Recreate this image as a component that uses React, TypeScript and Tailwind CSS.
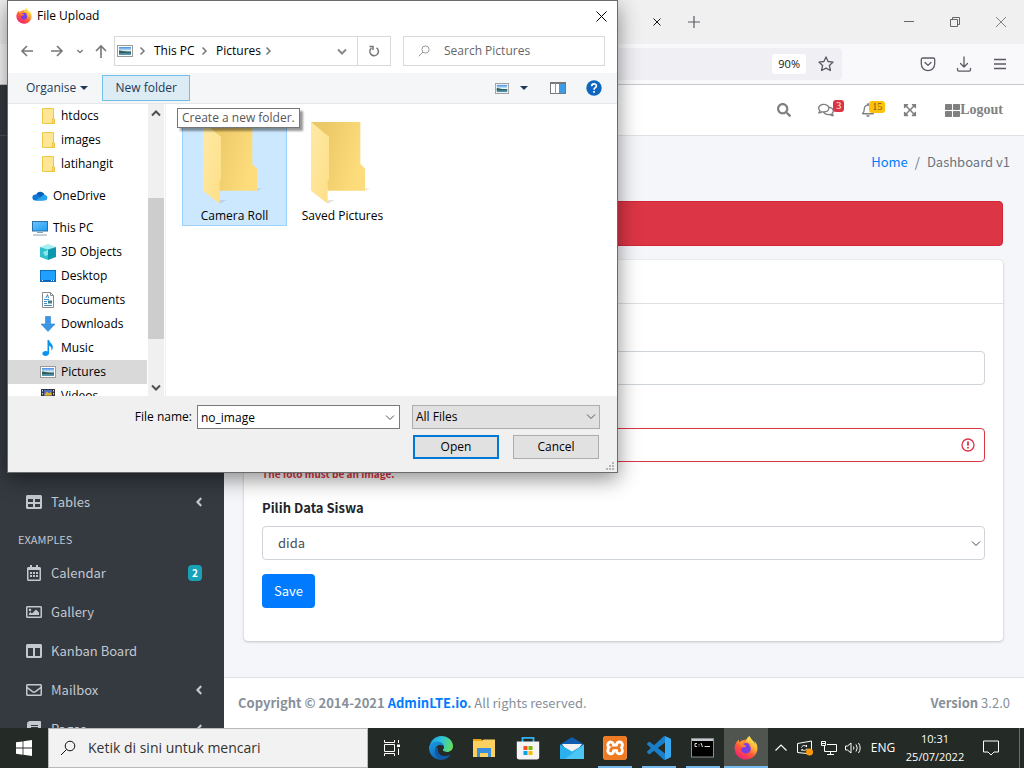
import React from "react";
import {
  FaAngleLeft,
  FaBook,
  FaColumns,
  FaExpandArrowsAlt,
  FaFirefoxBrowser,
  FaRegBell,
  FaRegCalendarAlt,
  FaRegComments,
  FaRegEnvelope,
  FaRegImage,
  FaSearch,
  FaTable,
  FaThLarge,
} from "react-icons/fa";
import { SiXampp } from "react-icons/si";

/* ---------- shared drawings ---------- */

function Gradients() {
  return (
    <svg className="absolute h-0 w-0" aria-hidden="true">
      <defs>
        <linearGradient id="flame" x1="0.85" y1="0.05" x2="0.25" y2="1">
          <stop offset="0" stopColor="#fff44f" />
          <stop offset="0.35" stopColor="#ffb13b" />
          <stop offset="0.6" stopColor="#ff5a36" />
          <stop offset="1" stopColor="#f0197f" />
        </linearGradient>
        <linearGradient id="folderBack" x1="0" y1="0" x2="1" y2="0.3">
          <stop offset="0.25" stopColor="#ecc866" />
          <stop offset="1" stopColor="#fddc7c" />
        </linearGradient>
        <linearGradient id="folderFront" x1="0" y1="0" x2="1" y2="1">
          <stop offset="0" stopColor="#fee9a6" />
          <stop offset="1" stopColor="#fddf86" />
        </linearGradient>
        <linearGradient id="sky" x1="0" y1="0" x2="0" y2="1">
          <stop offset="0" stopColor="#3f8ee0" />
          <stop offset="0.5" stopColor="#e6f3fb" />
          <stop offset="0.6" stopColor="#3f6f6a" />
          <stop offset="1" stopColor="#5b9bc8" />
        </linearGradient>
        <linearGradient id="screen" x1="0" y1="0" x2="1" y2="1">
          <stop offset="0" stopColor="#6cc4ff" />
          <stop offset="1" stopColor="#1f9bf0" />
        </linearGradient>
        <linearGradient id="edgeTop" x1="0" y1="0.3" x2="1" y2="0.5">
          <stop offset="0" stopColor="#1ca5e4" />
          <stop offset="0.5" stopColor="#2fc4d8" />
          <stop offset="1" stopColor="#66dd5a" />
        </linearGradient>
        <linearGradient id="edgeBody" x1="0" y1="0" x2="0.6" y2="1">
          <stop offset="0" stopColor="#1a9fe4" />
          <stop offset="1" stopColor="#0f62b4" />
        </linearGradient>
      </defs>
    </svg>
  );
}

function Firefox({ className }: { className: string }) {
  return (
    <span className={`relative inline-block ${className}`}>
      <svg viewBox="0 0 24 24" className="absolute inset-0 h-full w-full">
        <circle cx="12" cy="12.5" r="9" fill="#ff8a2a" />
        <circle cx="12" cy="12.5" r="5.5" fill="#7a3fe4" />
      </svg>
      <FaFirefoxBrowser fill="url(#flame)" className="relative h-full w-full" />
    </span>
  );
}

function PictureIcon({ className }: { className: string }) {
  return (
    <svg viewBox="0 0 16 12" className={className} preserveAspectRatio="none">
      <rect x="0.5" y="0.5" width="15" height="11" fill="#fff" stroke="#9a9a9a" />
      <rect x="2" y="2" width="12" height="8" fill="url(#sky)" />
      <path d="M2 5.5c3 0 5 1.5 12 1.8V8H2z" fill="#2f5f58" />
    </svg>
  );
}

function Chevron({ className, dir }: { className: string; dir: "up" | "down" | "right" }) {
  const d = { up: "M2 7.5 6 3.5l4 4", down: "M2 4.5l4 4 4-4", right: "M4.5 2.5 8 6l-3.5 3.5" }[dir];
  return (
    <svg viewBox="0 0 12 12" className={className} fill="none" stroke="currentColor">
      <path d={d} />
    </svg>
  );
}

function Magnifier({ className }: { className: string }) {
  return (
    <svg viewBox="0 0 16 16" className={className} fill="none" stroke="currentColor">
      <circle cx="10" cy="6" r="4.8" />
      <path d="M6.6 9.4 1 15" />
    </svg>
  );
}

/* ---------- browser window ---------- */

function BrowserChrome() {
  return (
    <header className="shrink-0">
      <div className="flex h-11 items-center bg-[#f0f0f0]">
        <div className="flex w-[673px] justify-end">
          <button aria-label="Close tab" className="flex w-8 justify-center">
            <svg viewBox="0 0 8 8" className="h-2 w-2" stroke="#15141a">
              <path d="M.5.5l7 7M7.5.5l-7 7" />
            </svg>
          </button>
        </div>
        <button aria-label="New tab" className="flex w-[42px] justify-center">
          <svg viewBox="0 0 12 12" className="h-3 w-3" stroke="#5b5b66" strokeWidth="1.2">
            <path d="M6 0v12M0 6h12" />
          </svg>
        </button>
        <div className="ml-auto flex text-[#666]">
          <button aria-label="Minimise" className="flex w-[46px] items-center justify-center">
            <svg viewBox="0 0 10 10" className="h-[10px] w-[10px]" stroke="currentColor">
              <path d="M0 4.5h10" />
            </svg>
          </button>
          <button aria-label="Restore" className="flex w-[46px] items-center justify-center">
            <svg viewBox="0 0 10 10" className="h-[10px] w-[10px]" fill="none" stroke="currentColor">
              <path d="M.5 2.5h7v7h-7zM2.5 2.5v-2h7v7h-2" />
            </svg>
          </button>
          <button aria-label="Close" className="flex w-[46px] items-center justify-center">
            <svg viewBox="0 0 10 10" className="h-[10px] w-[10px]" stroke="currentColor" strokeWidth="0.8">
              <path d="M0 0l10 10M10 0L0 10" />
            </svg>
          </button>
        </div>
      </div>
      <div className="flex h-[41px] items-center border-b border-[#c8c8cc] bg-[#f9f9fb] text-[#5b5b66]">
        <div className="ml-32 flex h-8 flex-1 items-center justify-end rounded bg-[#f0f0f4] pr-2">
          <button className="h-5 rounded-[3px] bg-white px-1.5 font-['Open_Sans',sans-serif] text-[11px] text-[#15141a]">
            90%
          </button>
          <button aria-label="Bookmark" className="ml-3">
            <svg viewBox="0 0 16 16" className="h-4 w-4" fill="none" stroke="currentColor" strokeWidth="1.3" strokeLinejoin="round">
              <path d="M8 .9l2.1 4.6 5 .6-3.7 3.4 1 5L8 12.1l-4.4 2.4 1-5L.9 6.1l5-.6z" />
            </svg>
          </button>
        </div>
        <div className="flex w-[182px] justify-end pr-1.5">
          <button aria-label="Pocket" className="flex w-9 justify-center">
            <svg viewBox="0 0 16 16" className="h-4 w-4" fill="none" stroke="currentColor" strokeWidth="1.3" strokeLinecap="round" strokeLinejoin="round">
              <path d="M2.7 2h10.6c.8 0 1.4.6 1.4 1.4V8a6.7 6.7 0 0 1-13.4 0V3.4C1.3 2.6 1.9 2 2.7 2z" />
              <path d="M5 6.5l3 2.9 3-2.9" />
            </svg>
          </button>
          <button aria-label="Downloads" className="flex w-9 justify-center">
            <svg viewBox="0 0 16 16" className="h-4 w-4" fill="none" stroke="currentColor" strokeWidth="1.3" strokeLinecap="round" strokeLinejoin="round">
              <path d="M8 1v10M4.5 7.5L8 11l3.5-3.5M1.5 12.5v1.3c0 .8.6 1.4 1.4 1.4h10.2c.8 0 1.4-.6 1.4-1.4v-1.3" />
            </svg>
          </button>
          <button aria-label="Menu" className="flex w-9 justify-center">
            <svg viewBox="0 0 14 16" className="h-4 w-[14px]" stroke="currentColor" strokeWidth="1.3">
              <path d="M1 3.5h12M1 8h12M1 12.5h12" />
            </svg>
          </button>
        </div>
      </div>
    </header>
  );
}

/* ---------- dashboard ---------- */

function SideItem({ icon, label, right }: { icon: React.ReactNode; label: string; right?: React.ReactNode }) {
  return (
    <li>
      <a href="#" className="flex h-[39px] items-center pl-[26px] pr-[22px]">
        <span className="flex w-[25px]">{icon}</span>
        <span className="flex-1">{label}</span>
        {right}
      </a>
    </li>
  );
}

function Sidebar() {
  const arrow = <FaAngleLeft className="-mr-1 h-[14px] w-[14px]" />;
  return (
    <aside className="w-56 shrink-0 overflow-hidden bg-[#343a40] text-[13px] leading-5 text-[#c2c7d0] shadow-[0_8px_20px_rgba(0,0,0,0.35)]">
      <div className="h-[51px] border-b border-[#4b545c]" />
      <nav className="pt-[346px]">
        <ul>
          <SideItem icon={<FaTable className="h-4 w-4" />} label="Tables" right={arrow} />
          <li className="flex h-8 items-center pl-[18px] pt-1 text-[11px]">EXAMPLES</li>
          <SideItem
            icon={<FaRegCalendarAlt className="h-4 w-4" />}
            label="Calendar"
            right={
              <span className="flex h-4 w-[14px] items-center justify-center rounded bg-[#17a2b8] text-[10px] font-bold text-white">
                2
              </span>
            }
          />
          <SideItem icon={<FaRegImage className="h-4 w-4" />} label="Gallery" />
          <SideItem icon={<FaColumns className="h-4 w-4" />} label="Kanban Board" />
          <SideItem icon={<FaRegEnvelope className="h-4 w-4" />} label="Mailbox" right={arrow} />
          <SideItem icon={<FaBook className="h-4 w-4" />} label="Pages" right={arrow} />
        </ul>
      </nav>
    </aside>
  );
}

function TopNav() {
  const cell = "relative flex w-[42px] justify-center";
  return (
    <nav className="flex h-[51px] shrink-0 items-center justify-end border-b border-[#dee2e6] bg-white pr-[21px] text-[#808080]">
      <button aria-label="Search" className={cell}>
        <FaSearch className="h-[14px] w-[14px]" />
      </button>
      <button aria-label="Messages" className={cell}>
        <FaRegComments className="h-4 w-4" />
        <span className="absolute -top-0.5 right-[3px] rounded-[3px] bg-[#dc3545] px-[3px] font-['Liberation_Serif',serif] text-[10px] leading-3 text-white">
          3
        </span>
      </button>
      <button aria-label="Notifications" className={cell}>
        <FaRegBell className="h-[14px] w-[14px]" />
        <span className="absolute -top-0.5 right-1 rounded-[3px] bg-[#ffc107] px-[3px] font-['Liberation_Serif',serif] text-[10px] leading-3 text-[#6b5a2a]">
          15
        </span>
      </button>
      <button aria-label="Full screen" className={cell}>
        <FaExpandArrowsAlt className="h-[14px] w-[14px]" />
      </button>
      <a href="#" className="flex items-center pl-[14px] font-['Liberation_Serif',serif] text-[14px] font-bold leading-5">
        <FaThLarge className="h-[15px] w-[15px]" />
        Logout
      </a>
    </nav>
  );
}

function FormCard() {
  return (
    <form className="mt-[14px] rounded bg-white text-[13px] shadow-[0_0_1px_rgba(0,0,0,0.125),0_1px_3px_rgba(0,0,0,0.2)]">
      <div className="h-11 border-b border-[#dfdfdf]" />
      <div className="px-[18px] pb-[33px] pt-[47px]">
        <input aria-label="Nama" className="block h-[34px] w-full rounded border border-[#ced4da] px-3" />
        <div className="mt-[43px] flex h-[34px] items-center rounded border border-[#dc3545] px-2">
          <input type="file" aria-label="Foto" className="min-w-0 flex-1" />
          <svg viewBox="0 0 16 16" className="h-4 w-4" fill="none" stroke="#dc3545">
            <circle cx="8" cy="8" r="6" strokeWidth="1.3" />
            <path d="M8 4.5v4.2M8 10v1.5" strokeWidth="1.8" />
          </svg>
        </div>
        <p className="mt-1 text-[10px] font-bold leading-4 text-[#dc3545]">The foto must be an image.</p>
        <label htmlFor="siswa" className="mt-4 block font-bold leading-5 text-[#212529]">
          Pilih Data Siswa
        </label>
        <div className="relative mt-2">
          <select
            id="siswa"
            className="block h-[34px] w-full appearance-none rounded border border-[#ced4da] bg-white pl-[15px] leading-5 text-[#495057]"
          >
            <option>dida</option>
          </select>
          <Chevron dir="down" className="pointer-events-none absolute right-[3px] top-[11px] h-3 w-3 text-[#444]" />
        </div>
        <button type="button" className="mt-[14px] h-[34px] rounded bg-[#007bff] px-3 leading-5 text-white">
          Save
        </button>
      </div>
    </form>
  );
}

function Dashboard() {
  return (
    <div className="flex min-h-0 flex-1 overflow-hidden font-['Noto_Sans_CJK_SC','Source_Sans_Pro',sans-serif]">
      <Sidebar />
      <div className="flex min-w-0 flex-1 flex-col bg-[#f4f6f9]">
        <TopNav />
        <main className="flex-1 pl-5 pr-[21px]">
          <div className="-mr-[7px] flex h-[65px] items-center justify-end pb-[14px] text-[13px] leading-5 text-[#6c757d]">
            <a href="#" className="text-[#007bff]">
              Home
            </a>
            <span className="px-[7px]">/</span>
            <span>Dashboard v1</span>
          </div>
          <div role="alert" className="h-[45px] rounded border border-[#d32535] bg-[#dc3545]" />
          <FormCard />
        </main>
        <footer className="flex h-[51px] shrink-0 items-center justify-between border-t border-[#dee2e6] bg-white px-[14px] text-[13px] leading-5 text-[#869099]">
          <span>
            <strong>
              Copyright © 2014-2021{" "}
              <a href="#" className="text-[#007bff]">
                AdminLTE.io
              </a>
              .
            </strong>{" "}
            All rights reserved.
          </span>
          <span>
            <b>Version</b> 3.2.0
          </span>
        </footer>
      </div>
    </div>
  );
}

/* ---------- file dialog ---------- */

const smallFolder = (
  <svg viewBox="0 0 16 16" className="h-4 w-4">
    <path d="M2.5.5h11v10l1 .8v4.2h-12z" fill="#ffe694" stroke="#ecc648" />
    <path d="M12.500 15.500v-4.500h2v4.500z" fill="#fbdc6f" stroke="#e5bb3c" strokeWidth="0.7" />
  </svg>
);

const treeItems: { label: string; icon: React.ReactNode; top?: boolean; active?: boolean }[] = [
  { label: "htdocs", icon: smallFolder },
  { label: "images", icon: smallFolder },
  { label: "latihangit", icon: smallFolder },
  {
    label: "OneDrive",
    top: true,
    icon: (
      <svg viewBox="0 0 16 16" className="h-4 w-4">
        <path d="M4 7a4.600 4.600 0 0 1 8.600-.5L8 11z" fill="#0a5fb8" />
        <path d="M3.600 6.500a4 4 0 0 1 3 .8l5 5.200H3.200a3 3 0 0 1 .4-6z" fill="#1177d6" />
        <path d="M11 7.200a3.300 3.300 0 0 1 2.200-.3 2.900 2.900 0 0 1-.2 5.700H3.500L8 9.500z" fill="#28a3ea" />
      </svg>
    ),
  },
  {
    label: "This PC",
    top: true,
    icon: (
      <svg viewBox="0 0 16 16" className="h-4 w-4">
        <rect x="0.5" y="1.5" width="15" height="9.5" fill="url(#screen)" stroke="#2a6fa8" />
        <path d="M5 12.5h6M1 15h14" stroke="#8fa0ae" />
      </svg>
    ),
  },
  {
    label: "3D Objects",
    icon: (
      <svg viewBox="0 0 16 16" className="h-4 w-4">
        <path d="M0 3l8-3 8 3-8 2.500z" fill="#a8eef2" />
        <path d="M0 3l8 2.500V16l-8-3z" fill="#2fc0cc" />
        <path d="M16 3L8 5.500V16l8-3z" fill="#0b98ae" />
        <path d="M3 8l5-2v5l-3 1z" fill="#8fe6ea" />
      </svg>
    ),
  },
  {
    label: "Desktop",
    icon: (
      <svg viewBox="0 0 16 16" className="h-4 w-4">
        <rect x="0.5" y="2.5" width="15" height="11" fill="#1fa0ff" stroke="#0b6fc4" />
        <path d="M1 12.5h14" stroke="#0a5fae" />
        <path d="M2 12.5h1M11 12.5h1M13 12.5h1" stroke="#fff" />
      </svg>
    ),
  },
  {
    label: "Documents",
    icon: (
      <svg viewBox="0 0 16 16" className="h-4 w-4">
        <path d="M2.5.5h8l3 3v12h-11z" fill="#fff" stroke="#8a8a8a" />
        <path d="M10.5.5v3h3" fill="none" stroke="#8a8a8a" />
        <path d="M6 6l1.500-3.500L8.500 6M4 7.500h5M4 9.500h3M4 11.500h3M4 13.500h8" fill="none" stroke="#3b8fd0" />
        <rect x="8" y="8.500" width="4" height="3" fill="#3f7f8a" />
      </svg>
    ),
  },
  {
    label: "Downloads",
    icon: (
      <svg viewBox="0 0 16 16" className="h-4 w-4">
        <path d="M5.5.5h5V8H15l-7 7.500L1 8h4.500z" fill="#3b97e6" stroke="#2a7fd0" strokeWidth="0.6" />
      </svg>
    ),
  },
  {
    label: "Music",
    icon: (
      <svg viewBox="0 0 16 16" className="h-4 w-4">
        <path d="M7.500 0h1.600c.4 2.800 4 4 3.700 7.500-.1 1.600-1 2.700-1.600 3.200.7-2.600 0-4.200-2.100-5v7.300c0 1.700-1.500 2.900-3.500 2.900S2.300 15 2.300 13.500 4 11 5.600 11c.7 0 1.300.1 1.900.4z" fill="#0a94f0" />
      </svg>
    ),
  },
  { label: "Pictures", active: true, icon: <PictureIcon className="h-3 w-4" /> },
  {
    label: "Videos",
    icon: (
      <svg viewBox="0 0 16 16" className="h-4 w-4">
        <rect x="1" y="1" width="14" height="14" fill="#333" />
        <path d="M2.500 2v12M13.500 2v12" stroke="#ddd" strokeDasharray="1.5 1.5" />
        <rect x="4" y="2" width="8" height="5.500" fill="#4a6fd0" />
        <path d="M4 7.500l3-4 2 2 1.500-1.500 1.500 3.500z" fill="#e6b422" />
      </svg>
    ),
  },
];

function BigFolder() {
  return (
    <svg viewBox="0 0 180 246" className="h-[82px] w-[60px]">
      <path d="M162 206l16-8-16 2zM50 245l22-12-22 2z" fill="#8a8a8a" opacity="0.25" />
      <path d="M0 0h148v126l14 14v66H50z" fill="url(#folderBack)" />
      <path d="M0 0l54 44v130l-4 4v67L0 206z" fill="url(#folderFront)" />
    </svg>
  );
}

function FileTile({ name, selected }: { name: string; selected?: boolean }) {
  return (
    <button
      className={`flex h-[116px] w-[105px] flex-col items-center border pt-[11px] ${
        selected ? "border-[#99d1ff] bg-[#cce8ff]" : "border-transparent"
      }`}
    >
      <span className="pl-1 pr-2">
        <BigFolder />
      </span>
      <span className="whitespace-nowrap pt-1">{name}</span>
    </button>
  );
}

function FileDialog() {
  return (
    <section
      role="dialog"
      aria-label="File Upload"
      className="absolute left-[7px] top-0 w-[611px] border border-[#6b6b6b] bg-white font-['Open_Sans','Noto_Sans',sans-serif] text-[12px] leading-4 text-black shadow-[0_6px_20px_rgba(0,0,0,0.45)]"
    >
      <div className="flex h-[30px] items-center pl-2 pr-[10px]">
        <Firefox className="h-4 w-4" />
        <h1 className="pl-[5px]">File Upload</h1>
        <button aria-label="Close dialog" className="ml-auto">
          <svg viewBox="0 0 11 11" className="h-[11px] w-[11px]" stroke="#000">
            <path d="M.5.5l10 10M10.500.5l-10 10" />
          </svg>
        </button>
      </div>

      <div className="flex h-[42px] items-center pb-0.5 pr-3 text-[#777]">
        <button aria-label="Back" className="ml-3">
          <svg viewBox="0 0 14 14" className="h-[14px] w-[14px]" fill="none" stroke="currentColor" strokeWidth="1.6">
            <path d="M13 7H2M7 2L2 7l5 5" />
          </svg>
        </button>
        <button aria-label="Forward" className="ml-4">
          <svg viewBox="0 0 14 14" className="h-[14px] w-[14px]" fill="none" stroke="currentColor" strokeWidth="1.6">
            <path d="M1 7h11M7 2l5 5-5 5" />
          </svg>
        </button>
        <button aria-label="Recent locations" className="ml-3">
          <Chevron dir="down" className="h-2 w-2 [stroke-width:2]" />
        </button>
        <button aria-label="Up" className="ml-[10px]">
          <svg viewBox="0 0 14 14" className="h-[14px] w-[14px]" fill="none" stroke="currentColor" strokeWidth="1.6">
            <path d="M7 14V2M2 7l5-5 5 5" />
          </svg>
        </button>
        <div className="ml-[6px] flex h-[30px] w-[277px] items-center border border-[#d9d9d9] text-black">
          <PictureIcon className="ml-0.5 h-3 w-4" />
          <Chevron dir="right" className="ml-[3px] h-3 w-3 text-[#777] [stroke-width:1.5]" />
          <span className="ml-1.5 w-[44px] whitespace-nowrap">This PC</span>
          <Chevron dir="right" className="h-3 w-3 text-[#777] [stroke-width:1.5]" />
          <span className="ml-1.5 w-[46px] whitespace-nowrap">Pictures</span>
          <Chevron dir="right" className="h-3 w-3 text-[#777] [stroke-width:1.5]" />
          <button aria-label="Previous locations" className="ml-auto mr-[9px]">
            <Chevron dir="down" className="h-3 w-3 text-[#888] [stroke-width:2]" />
          </button>
          <button aria-label="Refresh" className="flex h-full w-[33px] items-center justify-center border-l border-[#d9d9d9]">
            <svg viewBox="0 0 12 12" className="h-3 w-3 text-[#777]" fill="none" stroke="currentColor" strokeWidth="1.5">
              <path d="M8.5 2.800A4.300 4.300 0 1 1 3.500 3M1.500 1.500h3.500v3.500" />
            </svg>
          </button>
        </div>
        <div className="ml-3 flex h-[30px] flex-1 items-center border border-[#d9d9d9]">
          <Magnifier className="ml-[14px] h-3 w-3 text-[#777]" />
          <input
            aria-label="Search Pictures"
            placeholder="Search Pictures"
            className="ml-[14px] min-w-0 flex-1 outline-none placeholder:text-[#666]"
          />
        </div>
      </div>

      <div className="flex h-[31px] items-center border-b border-[#e3e6ea] bg-[#f5f6f7] pr-[15px] text-[#1e395b]">
        <button className="flex items-center gap-1 pl-[18px]">
          Organise
          <svg viewBox="0 0 8 4" className="h-1 w-2" fill="currentColor">
            <path d="M0 0h8L4 4z" />
          </svg>
        </button>
        <button className="ml-[14px] h-[26px] w-22 border border-[#6fbfe8] bg-[#dcebf4]">New folder</button>
        <div className="ml-auto flex items-center">
          <button aria-label="Change view" className="flex items-center gap-[11px]">
            <PictureIcon className="h-[11px] w-[14px]" />
            <svg viewBox="0 0 8 4" className="h-1 w-2" fill="currentColor">
              <path d="M0 0h8L4 4z" />
            </svg>
          </button>
          <button aria-label="Preview pane" className="ml-[22px]">
            <svg viewBox="0 0 16 12" className="h-3 w-4">
              <rect x="0.5" y="0.5" width="15" height="11" fill="#fff" stroke="#777" />
              <path d="M0 1h16" stroke="#777" strokeWidth="2" />
              <path d="M5.500 1v11" stroke="#999" />
              <rect x="9" y="2" width="6" height="9" fill="#3e9be8" />
            </svg>
          </button>
          <button aria-label="Help" className="ml-5">
            <svg viewBox="0 0 16 16" className="h-4 w-4">
              <circle cx="8" cy="8" r="7.7" fill="#0e66c0" />
              <path d="M5.700 6.200c0-3.200 4.700-3 4.700-.3C10.400 7.700 8 7.600 8 9.700M8 11v1.700" fill="none" stroke="#fff" strokeWidth="1.7" />
            </svg>
          </button>
        </div>
      </div>

      <div className="flex h-[292px]">
        <ul className="w-[139px] overflow-hidden">
          {treeItems.map((item) => (
            <li key={item.label} className={item.top ? "pt-2" : ""}>
              <button
                className={`flex h-6 w-full items-center gap-[5px] whitespace-nowrap ${item.top ? "pl-6" : "pl-8"} ${
                  item.active ? "bg-[#d9d9d9]" : ""
                }`}
              >
                {item.icon}
                {item.label}
              </button>
            </li>
          ))}
        </ul>
        <div className="ml-px flex w-4 flex-col items-center bg-[#f0f0f0] pb-[3px] pt-1">
          <Chevron dir="up" className="h-3 w-3 text-[#505050] [stroke-width:2]" />
          <div className="mb-auto mt-[78px] h-[141px] w-full bg-[#cdcdcd]" />
          <Chevron dir="down" className="h-3 w-3 text-[#505050] [stroke-width:2]" />
        </div>
        <div className="ml-px flex flex-1 items-start gap-[3px] border-l border-[#f0f0f0] pl-4 pt-[6px]">
          <FileTile name="Camera Roll" selected />
          <FileTile name="Saved Pictures" />
        </div>
      </div>

      <div className="flex flex-col bg-[#f0f0f0] pb-[13px] pr-[17px] pt-[9px]">
        <div className="flex items-center justify-end">
          <label htmlFor="filename" className="pr-[5px]">
            File name:
          </label>
          <div className="flex h-6 w-[203px] items-center border border-[#7a7a7a] bg-white pr-[3px]">
            <input id="filename" defaultValue="no_image" className="min-w-0 flex-1 pl-[3px] pt-px outline-none" />
            <Chevron dir="down" className="h-3 w-3 text-[#555]" />
          </div>
          <div className="relative ml-3">
            <select
              aria-label="File type"
              className="block h-6 w-[188px] appearance-none border border-[#adadad] bg-[#e1e1e1] pl-[3px]"
            >
              <option>All Files</option>
            </select>
            <Chevron dir="down" className="pointer-events-none absolute right-[3px] top-[5px] h-3 w-3 text-[#555]" />
          </div>
        </div>
        <div className="mt-[6px] flex justify-end gap-[14px] pr-px">
          <button className="h-6 w-[86px] border-2 border-[#0078d7] bg-[#e1e1e1]">Open</button>
          <button className="h-6 w-[86px] border border-[#adadad] bg-[#e1e1e1]">Cancel</button>
        </div>
      </div>

      <svg viewBox="0 0 8 8" className="absolute bottom-0.5 right-[3px] h-2 w-2" fill="#b5b5b5">
        <path d="M6 0h2v2H6zM3 3h2v2H3zM6 3h2v2H6zM0 6h2v2H0zM3 6h2v2H3zM6 6h2v2H6z" />
      </svg>

      <div
        role="tooltip"
        className="absolute left-[169px] top-[107px] whitespace-nowrap border border-[#767676] bg-white px-1 py-px text-[#575757] shadow-[3px_3px_2px_rgba(0,0,0,0.4)]"
      >
        Create a new folder.
      </div>
    </section>
  );
}

/* ---------- taskbar ---------- */

function TaskApp({ label, state, children }: { label: string; state?: "open" | "active"; children: React.ReactNode }) {
  return (
    <button
      aria-label={label}
      className={`flex h-full flex-col items-center ${state === "active" ? "bg-[#505550]" : ""}`}
    >
      <span className="flex h-[38px] items-center justify-center pt-0.5">{children}</span>
      {state && <span className={`h-0.5 bg-[#76b9ed] ${state === "active" ? "w-full" : "w-[34px]"}`} />}
    </button>
  );
}

function Taskbar() {
  return (
    <footer className="flex h-10 shrink-0 items-center bg-[#242a25] font-['Open_Sans','Noto_Sans',sans-serif] text-white">
      <button aria-label="Start" className="flex w-12 justify-center">
        <svg viewBox="0 0 16 16" className="h-4 w-4" fill="#fff">
          <path d="M0 2.300L6.600 1.400v6.200H0zM7.400 1.200L16 0v7.600H7.400zM0 8.400h6.600v6.300L0 13.700zM7.400 8.400H16V16l-8.600-1.200z" />
        </svg>
      </button>
      <div className="flex h-full w-80 items-center border border-[#b8b8b8] bg-[#f2f2f2] pl-[11px] text-[#111]">
        <Magnifier className="h-4 w-4" />
        <input
          aria-label="Ketik di sini untuk mencari"
          placeholder="Ketik di sini untuk mencari"
          className="ml-3 min-w-0 flex-1 text-[14px] leading-5 outline-none placeholder:text-[#333]"
        />
      </div>
      <button aria-label="Task view" className="flex w-12 justify-center">
        <svg viewBox="0 0 16 16" className="h-4 w-4" fill="none" stroke="#fff">
          <path d="M.5 0v2.500h10V0M.5 16v-2.500h10V16M.5 4.500h10v7H.5zM14.500 0v3M14.500 8.500V15" />
          <path d="M13 4.500h3v2.500h-3z" fill="#fff" stroke="none" />
        </svg>
      </button>
      <div className="ml-[3px] grid h-full w-[349px] grid-cols-8">
        <TaskApp label="Edge">
          <svg viewBox="0 0 24 24" className="h-6 w-6">
            <path d="M.5 13C.5 5 6 0 12.300 0 19 0 24 4.800 24 10c0 4-3 6-6 6-2.800 0-4.200-1-4.200-2 0-.8 1.200-1.200 1.200-3 0-2-2-4.500-5.500-4.500C4 6.500.5 10 .5 13z" fill="url(#edgeTop)" />
            <path d="M0 12c0-4 4-6.500 8.500-6.500 3.500 0 6.500 2.500 6.500 5.500 0 0-1.500-2-4-2-3 0-4.500 2.500-4.500 5 0 5 5 8.500 9.500 8.500-1 .8-2.700 1.300-4.200 1.300C5 23.800 0 18.500 0 12z" fill="url(#edgeBody)" />
            <path d="M9 11c-1 3 .5 9 6.500 9 3 0 5-.8 6.500-1.700-1.500 2.700-4 4.500-7 5.200C9 24 5 19 6 14c.4-1.500 1.500-2.600 3-3z" fill="#1159a8" />
            <path d="M9.600 10.500c1.200-1.300 3.500-1.300 5.200.2.300 1.500-1 2.300-1 3.300s1 2 4.200 2c1.800 0 3.200-.5 4.200-1.300l.6 2.400c-2 1.900-4.500 2.600-7.300 2.300-5-.6-7.600-5.500-5.900-8.900z" fill="#242a25" />
          </svg>
        </TaskApp>
        <TaskApp label="File Explorer">
          <svg viewBox="0 0 22 20" className="h-5 w-[22px]">
            <path d="M0 1h8l2 2H0z" fill="#e8a50c" />
            <path d="M0 3h9l1.500-1.500H22V19H0z" fill="#fdd160" />
            <path d="M4 10h14v9h-3v-4H7v4H4z" fill="#3b8edb" />
          </svg>
        </TaskApp>
        <TaskApp label="Microsoft Store">
          <svg viewBox="0 0 24 24" className="h-6 w-6">
            <path d="M6.500 6V1.800h11V6" fill="none" stroke="#2fb6f0" strokeWidth="1.8" />
            <path d="M.8 5.500h22.400V21a2.500 2.500 0 0 1-2.500 2.500H3.300A2.500 2.500 0 0 1 .8 21z" fill="#f4f4f4" />
            <path d="M7.500 10h4v4h-4z" fill="#f25022" />
            <path d="M12.500 10h4v4h-4z" fill="#7fba00" />
            <path d="M7.500 15h4v4h-4z" fill="#00a4ef" />
            <path d="M12.500 15h4v4h-4z" fill="#ffb900" />
          </svg>
        </TaskApp>
        <TaskApp label="Mail">
          <svg viewBox="0 0 24 22" className="h-[22px] w-6">
            <path d="M0 7.500L12 0l12 7.500V10H0z" fill="#0f5cb0" />
            <path d="M2 7h20l-8 10H9z" fill="#f2f2f2" />
            <path d="M0 7.500l12 7 12-7V22H0z" fill="#2bb0ee" />
            <path d="M24 7.500L5 22h19z" fill="#4cc6f5" />
          </svg>
        </TaskApp>
        <TaskApp label="XAMPP" state="open">
          <span className="flex h-6 w-6 items-center justify-center rounded-sm bg-white">
            <SiXampp className="h-6 w-6 text-[#ee7a24]" />
          </span>
        </TaskApp>
        <TaskApp label="Visual Studio Code" state="open">
          <svg viewBox="0 0 24 24" className="h-6 w-6">
            <path
              d="M23.15 2.587L18.21.21a1.494 1.494 0 0 0-1.705.29l-9.46 8.63-4.12-3.128a.999.999 0 0 0-1.276.057L.327 7.261A1 1 0 0 0 .326 8.74L3.899 12 .326 15.26a1 1 0 0 0 .001 1.479L1.65 17.94a.999.999 0 0 0 1.276.057l4.12-3.128 9.46 8.63a1.492 1.492 0 0 0 1.704.29l4.942-2.377A1.5 1.5 0 0 0 24 20.06V3.939a1.5 1.5 0 0 0-.85-1.352zm-5.146 14.861L10.826 12l7.178-5.448v10.896z"
              fill="#1a7fc8"
            />
            <path d="M18 .2l5.200 2.400c.5.3.8.8.8 1.300v16.200c0 .5-.3 1-.8 1.300L18 23.800z" fill="#35a8f0" />
          </svg>
        </TaskApp>
        <TaskApp label="Command Prompt" state="open">
          <svg viewBox="0 0 24 20" className="h-5 w-6">
            <rect x="0.5" y="0.5" width="22" height="18.5" fill="#000" stroke="#8b8f92" />
            <path d="M1 2h21" stroke="#c4cace" strokeWidth="2" />
            <path d="M6 5.500H4v3h2M8 6v.8M8 7.700v.8M10 5l1.500 4M13.500 8.500H19" fill="none" stroke="#ddd" />
          </svg>
        </TaskApp>
        <TaskApp label="Firefox" state="active">
          <Firefox className="h-6 w-6" />
        </TaskApp>
      </div>
      <div className="ml-auto flex h-full items-center">
        <button aria-label="Show hidden icons" className="flex w-6 justify-center">
          <svg viewBox="0 0 12 12" className="h-3 w-3" fill="none" stroke="#fff" strokeWidth="1.2">
            <path d="M.5 8.500L6 3l5.500 5.500" />
          </svg>
        </button>
        <button aria-label="Updates" className="flex w-6 justify-center">
          <svg viewBox="0 0 16 16" className="h-4 w-4" fill="none" stroke="#fff">
            <path d="M.5 3.500l14-2.500v13l-14-1.500z" />
            <path d="M4.500 7.500c1-2.500 4-2.500 5-.5V5M10 8.500c-1 2.500-4 2.500-5 .5v2" />
            <circle cx="12.5" cy="12" r="3.500" fill="#ff9a0a" stroke="none" />
          </svg>
        </button>
        <button aria-label="Network" className="flex w-6 justify-center">
          <svg viewBox="0 0 16 16" className="h-4 w-4" fill="none" stroke="#fff">
            <path d="M6 4.500h9.500v7h-12V6M9.500 11.500v3M6 14.500h7M.5 1.500h4v4h-4zM.5 3.500h4" />
          </svg>
        </button>
        <button aria-label="Volume" className="flex w-6 justify-center">
          <svg viewBox="0 0 17 16" className="h-4 w-[17px]" fill="none" stroke="#fff">
            <path d="M.5 6h2L6 3v10l-3.500-3h-2zM8.500 6.500a3 3 0 0 1 0 3M11 4.500a6 6 0 0 1 0 7M13.500 3a9 9 0 0 1 0 10" />
          </svg>
        </button>
        <span className="w-9 text-center text-[12px] leading-4">ENG</span>
        <span className="w-[68px] text-center text-[11px] leading-[18px]">
          10:31
          <br />
          25/07/2022
        </span>
        <button aria-label="Notifications centre" className="flex w-11 justify-center">
          <svg viewBox="0 0 16 16" className="h-4 w-4" fill="none" stroke="#fff">
            <path d="M.5 1h15v11h-4.500L8 15l-3-3H.5z" />
          </svg>
        </button>
        <span className="ml-[6px] h-full w-[5px] border-l border-[#6a6f6b]" />
      </div>
    </footer>
  );
}

export default function App() {
  return (
    <div className="relative flex h-screen flex-col overflow-hidden">
      <Gradients />
      <BrowserChrome />
      <Dashboard />
      <FileDialog />
      <Taskbar />
    </div>
  );
}
